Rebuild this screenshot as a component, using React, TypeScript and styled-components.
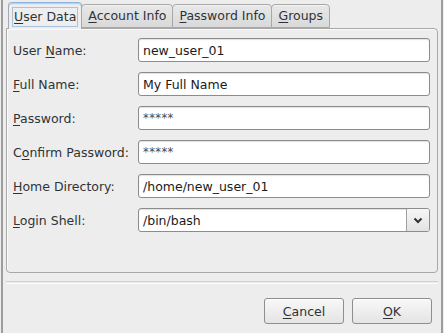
import React, { FC } from 'react';
import styled, { createGlobalStyle } from 'styled-components';

const Global = createGlobalStyle`
  html, body { margin: 0; padding: 0; background: #ededed; }
  body { font-family: "DejaVu Sans", "Liberation Sans", sans-serif; font-size: 12.5px; color: #2e3436; }
`;

type Field = { label: string; key: number; value: string; combo?: boolean };

const fields: Field[] = [
  { label: 'User Name:', key: 5, value: 'new_user_01' },
  { label: 'Full Name:', key: 0, value: 'My Full Name' },
  { label: 'Password:', key: 0, value: '*****' },
  { label: 'Confirm Password:', key: 1, value: '*****' },
  { label: 'Home Directory:', key: 0, value: '/home/new_user_01' },
  { label: 'Login Shell:', key: 0, value: '/bin/bash', combo: true },
];

const tabs: { label: string; key: number }[] = [
  { label: 'User Data', key: 0 },
  { label: 'Account Info', key: 0 },
  { label: 'Password Info', key: 0 },
  { label: 'Groups', key: 0 },
];

const Mnemonic: FC<{ text: string; at: number }> = ({ text, at }) => (
  <>
    {text.slice(0, at)}
    <U>{text[at]}</U>
    {text.slice(at + 1)}
  </>
);

export default function App() {
  return (
    <>
      <Global />
      <Frame>
        <Dialog>
          <Notebook>
            <TabBar>
              {tabs.map((t, i) => (
                <Tab key={t.label} active={i === 0}>
                  <TabLabel active={i === 0}>
                    <Mnemonic text={t.label} at={t.key} />
                  </TabLabel>
                </Tab>
              ))}
            </TabBar>
            <Panel>
              <Form>
                {fields.map(f => (
                  <React.Fragment key={f.label}>
                    <Label>
                      <Mnemonic text={f.label} at={f.key} />
                    </Label>
                    <Entry>
                      <EntryText masked={f.value === '*****'}>{f.value}</EntryText>
                      {f.combo && (
                        <ComboButton>
                          <svg width="10" height="7" viewBox="0 0 10 7">
                            <polyline points="1.5,1.5 5,5 8.5,1.5" fill="none" stroke="#2e3436" strokeWidth="2" />
                          </svg>
                        </ComboButton>
                      )}
                    </Entry>
                  </React.Fragment>
                ))}
              </Form>
            </Panel>
          </Notebook>
          <Separator />
          <Actions>
            <Button><Mnemonic text="Cancel" at={0} /></Button>
            <Button><Mnemonic text="OK" at={0} /></Button>
          </Actions>
        </Dialog>
      </Frame>
    </>
  );
}

const Frame = styled.div`
  width: 444px;
  height: 333px;
  box-sizing: border-box;
  padding: 0 1px 0 1px;
  background: #ededed;
  overflow: hidden;
`;

const Dialog = styled.div`
  height: 100%;
  box-sizing: border-box;
  border-left: 2px solid #9d9d9d;
  border-right: 2px solid #9d9d9d;
  display: flex;
  flex-direction: column;
`;

const Notebook = styled.div`
  padding: 1px 3px 0 3px;
`;

const TabBar = styled.div`
  display: flex;
  align-items: flex-end;
  height: 27px;
  padding-left: 2px;
  position: relative;
  z-index: 1;
`;

const Tab = styled.div<{ active?: boolean }>`
  box-sizing: border-box;
  height: ${p => (p.active ? '27px' : '24px')};
  margin-bottom: ${p => (p.active ? '-1px' : '0')};
  padding: 0 ${p => (p.active ? '3px' : '4px')};
  display: flex;
  align-items: center;
  border: 1px solid #a8a8a8;
  border-bottom: ${p => (p.active ? 'none' : '1px solid #a8a8a8')};
  border-top-color: ${p => (p.active ? '#8fb3dc' : '#a8a8a8')};
  border-radius: 4px 4px 0 0;
  background: ${p => (p.active ? '#eeeeee' : 'linear-gradient(#e8e8e8, #d9d9d9)')};
  box-shadow: ${p => (p.active ? 'inset 0 1px 0 #b9d1ec, inset 0 2px 0 #dce8f5' : 'inset 0 1px 0 #f3f3f3')};
  margin-right: -1px;
  color: #2e3436;
`;

const TabLabel = styled.span<{ active?: boolean }>`
  display: inline-block;
  padding: 2px 1px;
  margin-top: ${p => (p.active ? '1px' : '0')};
  border: 1px solid ${p => (p.active ? '#a9c2df' : 'transparent')};
  line-height: 14px;
`;

const U = styled.span`
  text-decoration: underline;
  text-underline-offset: 2px;
`;

const Panel = styled.div`
  box-sizing: border-box;
  height: 245px;
  border: 1px solid #a8a8a8;
  border-radius: 0 4px 4px 4px;
  background: #ededed;
  box-shadow: inset 1px 1px 0 #fafafa;
  padding: 9px 7px 0 6px;
`;

const Form = styled.div`
  display: grid;
  grid-template-columns: 125px 1fr;
  row-gap: 10px;
  align-items: center;
`;

const Label = styled.div`
  color: #2e3436;
  white-space: nowrap;
`;

const Entry = styled.div`
  box-sizing: border-box;
  height: 24px;
  display: flex;
  align-items: stretch;
  border: 1px solid #8c8c8c;
  border-radius: 3px;
  background: #fff;
  box-shadow: inset 0 1px 1px rgba(0, 0, 0, 0.12);
  overflow: hidden;
`;

const EntryText = styled.div<{ masked?: boolean }>`
  flex: 1;
  display: flex;
  align-items: center;
  padding-left: 4px;
  color: ${p => (p.masked ? '#4a4a4a' : '#1a1a1a')};
  font-size: ${p => (p.masked ? '11.5px' : 'inherit')};
  letter-spacing: ${p => (p.masked ? '0.4px' : '0')};
`;

const ComboButton = styled.div`
  width: 22px;
  border-left: 1px solid #a0a0a0;
  background: linear-gradient(#f7f7f7, #e2e2e2);
  display: flex;
  align-items: center;
  justify-content: center;
`;

const Separator = styled.div`
  margin: 8px 3px 0 3px;
  height: 1px;
  border-top: 1px solid #cfcfcf;
  border-bottom: 1px solid #fbfbfb;
`;

const Actions = styled.div`
  display: flex;
  justify-content: flex-end;
  gap: 8px;
  padding: 14px 9px 0 0;
`;

const Button = styled.div`
  box-sizing: border-box;
  width: 80px;
  height: 26px;
  display: flex;
  align-items: center;
  justify-content: center;
  border: 1px solid #8e8e8e;
  border-radius: 3px;
  background: linear-gradient(#f8f8f8, #e4e4e4);
  box-shadow: inset 0 1px 0 #ffffff;
  color: #2e3436;
`;
